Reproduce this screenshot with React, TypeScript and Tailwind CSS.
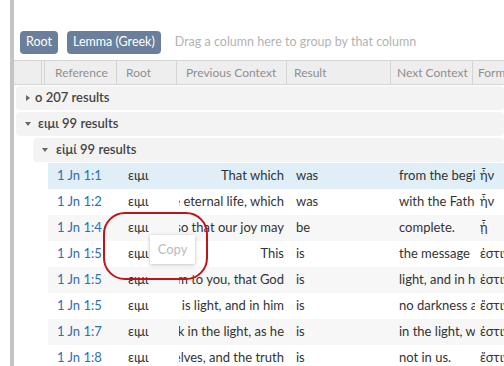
import React from "react";

const rows = [
  { ref: "1 Jn 1:1", prev: "That which", res: "was", next: "from the beginning", form: "ἦν", hl: true },
  { ref: "1 Jn 1:2", prev: "the eternal life, which", res: "was", next: "with the Father", form: "ἦν" },
  { ref: "1 Jn 1:4", prev: "so that our joy may", res: "be", next: "complete.", form: "ᾖ" },
  { ref: "1 Jn 1:5", prev: "This", res: "is", next: "the message", form: "ἐστιν" },
  { ref: "1 Jn 1:5", prev: "proclaim to you, that God", res: "is", next: "light, and in him", form: "ἐστιν" },
  { ref: "1 Jn 1:5", prev: "God is light, and in him", res: "is", next: "no darkness at all", form: "ἔστιν" },
  { ref: "1 Jn 1:7", prev: "walk in the light, as he", res: "is", next: "in the light, we", form: "ἐστιν" },
  { ref: "1 Jn 1:8", prev: "deceive ourselves, and the truth", res: "is", next: "not in us.", form: "ἔστιν" },
];

function TriRight() {
  return (
    <svg width="6" height="8" viewBox="0 0 6 8" className="shrink-0">
      <path d="M1 1 L5 4 L1 7 Z" fill="#666" />
    </svg>
  );
}
function TriDown() {
  return (
    <svg width="8" height="6" viewBox="0 0 8 6" className="shrink-0">
      <path d="M1 1 L7 1 L4 5 Z" fill="#666" />
    </svg>
  );
}

export default function App() {
  return (
    <div
      className="relative w-[504px] h-[366px] overflow-hidden bg-white flex text-[13px] text-[#333]"
      style={{ fontFamily: "Lato, 'Noto Sans', sans-serif" }}
    >
      <div className="w-[10px] shrink-0" />
      <div className="w-[4px] shrink-0 bg-[#c4c4c4]" />
      <div className="flex-1 min-w-0 flex flex-col">
        <div className="h-[30px] shrink-0" />
        <div className="h-[24px] shrink-0 flex items-center pl-[6px]">
          <div className="h-[23px] px-[6px] flex items-center rounded-[4px] bg-[#6a7f9b] text-white text-[12.5px]">Root</div>
          <div className="ml-[9px] h-[23px] px-[6px] flex items-center rounded-[4px] bg-[#6a7f9b] text-white text-[12.5px]">Lemma (Greek)</div>
          <div className="ml-[14px] text-[12.5px] text-[#b3b3b3] whitespace-nowrap">Drag a column here to group by that column</div>
        </div>
        <div className="h-[6px] shrink-0" />
        {/* header */}
        <div className="h-[25px] shrink-0 flex bg-[#eeeeee] border-y border-[#d4d4d4] text-[#8f8f8f] text-[12px] whitespace-nowrap">
          <div className="w-[28px] shrink-0 border-r border-[#d4d4d4]" />
          <div className="w-[3px] shrink-0 border-r border-[#d4d4d4]" />
          <div className="w-[72px] shrink-0 border-r border-[#d4d4d4] pl-[10px] flex items-center">Reference</div>
          <div className="w-[60px] shrink-0 border-r border-[#d4d4d4] pl-[9px] flex items-center">Root</div>
          <div className="w-[110px] shrink-0 border-r border-[#d4d4d4] pl-[9px] flex items-center overflow-hidden">Previous Context</div>
          <div className="w-[104px] shrink-0 border-r border-[#d4d4d4] pl-[7px] flex items-center">Result</div>
          <div className="w-[82px] shrink-0 border-r border-[#d4d4d4] pl-[6px] flex items-center overflow-hidden">Next Context</div>
          <div className="flex-1 pl-[5px] flex items-center overflow-hidden">Form</div>
        </div>
        <div className="h-[1px] shrink-0" />
        {/* groups */}
        <div className="ml-[2px] h-[24px] shrink-0 flex items-center bg-[#f3f3f3] rounded-[4px] pl-[9px] font-semibold text-[#444]">
          <TriRight />
          <span className="ml-[4px]">ο 207 results</span>
        </div>
        <div className="h-[2px] shrink-0" />
        <div className="ml-[2px] h-[24px] shrink-0 flex items-center bg-[#f3f3f3] rounded-[4px] pl-[8px] font-semibold text-[#444]">
          <TriDown />
          <span className="ml-[6px]">ειμι 99 results</span>
        </div>
        <div className="h-[2px] shrink-0" />
        <div className="ml-[19px] h-[24px] shrink-0 flex items-center bg-[#f3f3f3] rounded-[4px] pl-[8px] font-semibold text-[#444]">
          <TriDown />
          <span className="ml-[7px]">εἰμί 99 results</span>
        </div>
        <div className="h-[1px] shrink-0" />
        <div className="ml-[34px] flex flex-col">
          {rows.map((r, i) => (
            <div
              key={i}
              className={
                "h-[26px] shrink-0 flex items-center whitespace-nowrap " +
                (r.hl ? "bg-[#e0eef8]" : i % 2 === 0 ? "bg-[#f7f7f7]" : "bg-white")
              }
            >
              <div className="w-[71px] shrink-0 pl-[9px] text-[#2f6db3]">{r.ref}</div>
              <div className="w-[60px] shrink-0 pl-[9px]">ειμι</div>
              <div className="w-[110px] shrink-0 pr-[5px] flex justify-end overflow-hidden">
                <span className="shrink-0">{r.prev}</span>
              </div>
              <div className="w-[104px] shrink-0 pl-[7px]">{r.res}</div>
              <div className="w-[82px] shrink-0 pl-[6px] pr-[5px] overflow-hidden">{r.next}</div>
              <div className="flex-1 pl-[5px] overflow-hidden">{r.form}</div>
            </div>
          ))}
        </div>
      </div>
      {/* overlays */}
      <div className="absolute left-[150px] top-[235px] w-[45px] h-[29px] bg-white shadow-[0_1px_4px_rgba(0,0,0,0.25)] flex items-center justify-center text-[#bbbbbb] text-[13px]">
        Copy
      </div>
      <div className="absolute left-[103px] top-[212px] w-[105px] h-[68px] rounded-[22px] border-2 border-[#c0141c]" />
    </div>
  );
}
